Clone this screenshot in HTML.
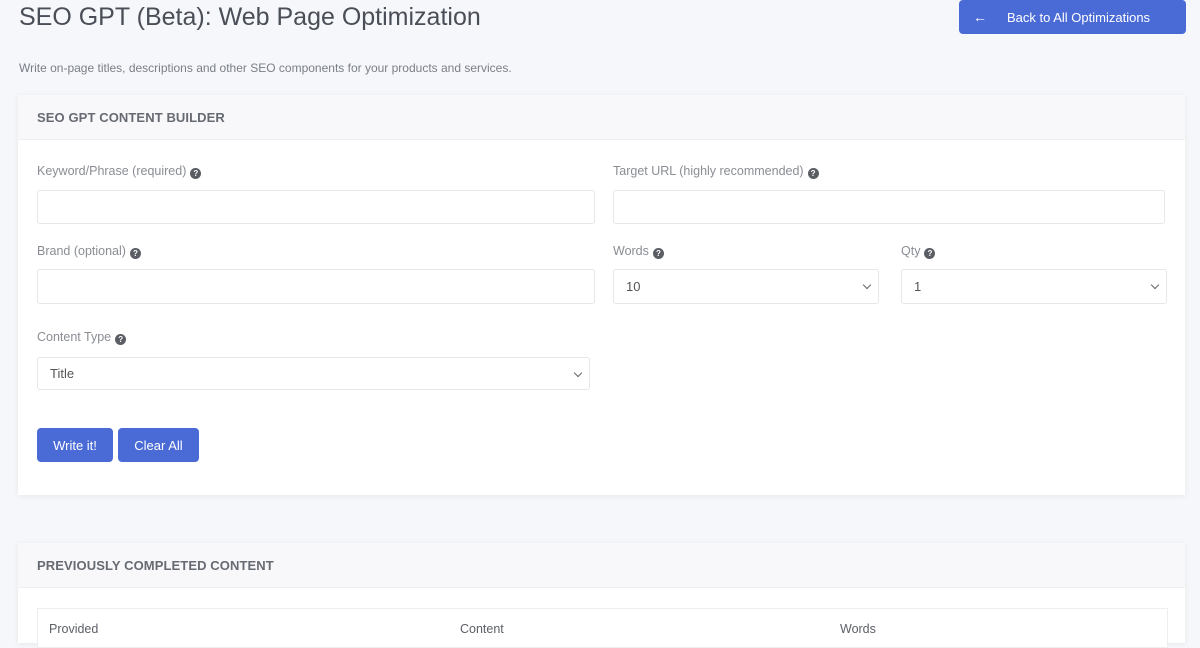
<!DOCTYPE html>
<html><head><meta charset="utf-8"><style>
*{box-sizing:border-box;margin:0;padding:0}
body{width:1200px;height:630px;overflow:hidden;background:#f6f7fa;font-family:"Liberation Sans",sans-serif;color:#6b6f78;position:relative}
.abs{position:absolute}
h1{position:absolute;left:19px;top:3px;font-size:25px;font-weight:normal;color:#4a4e57}
.sub{left:19px;top:61px;font-size:12px;color:#7a7e87}
.btn{background:#4a6ad6;color:#fff;border-radius:4px;font-size:13px;display:flex;align-items:center;justify-content:center}
.card{background:#fff;box-shadow:0 1px 6px rgba(0,0,0,.07)}
.hdr{background:#f8f8fa;border-bottom:1px solid #eeeff2;font-size:13px;font-weight:bold;color:#666a72;padding-left:19px;display:flex;align-items:center;letter-spacing:.1px}
.lbl{font-size:12.5px;color:#8a8d94}
.q{display:inline-block;width:11px;height:11px;border-radius:50%;background:#5a5d64;color:#fff;font-size:8px;text-align:center;line-height:11px;font-weight:bold;vertical-align:-1px;margin-left:4px}
.inp{border:1px solid #e6e7eb;border-radius:3px;background:#fff;font-size:13px;color:#555;padding-left:12px;display:flex;align-items:center}
.chev{position:absolute;right:8px;top:12px;width:6px;height:6px;border-right:1.5px solid #666;border-bottom:1.5px solid #666;transform:rotate(45deg)}
</style></head><body>
<h1>SEO GPT (Beta): Web Page Optimization</h1>
<div class="abs btn" style="left:959px;top:0;width:227px;height:34px;justify-content:flex-start;padding-left:14px;font-size:13px"><span style="font-size:14px;margin-right:20px">←</span>Back to All Optimizations</div>
<div class="abs sub">Write on-page titles, descriptions and other SEO components for your products and services.</div>

<div class="abs card" style="left:18px;top:95px;width:1167px;height:400px">
<div class="hdr" style="height:45px">SEO GPT CONTENT BUILDER</div>
</div>
<div class="abs lbl" style="left:37px;top:164px">Keyword/Phrase (required)<span class="q">?</span></div>
<div class="abs lbl" style="left:613px;top:164px">Target URL (highly recommended)<span class="q">?</span></div>
<div class="abs inp" style="left:37px;top:190px;width:558px;height:34px"></div>
<div class="abs inp" style="left:613px;top:190px;width:552px;height:34px"></div>
<div class="abs lbl" style="left:37px;top:244px">Brand (optional)<span class="q">?</span></div>
<div class="abs lbl" style="left:613px;top:244px">Words<span class="q">?</span></div>
<div class="abs lbl" style="left:901px;top:244px">Qty<span class="q">?</span></div>
<div class="abs inp" style="left:37px;top:269px;width:558px;height:35px"></div>
<div class="abs inp" style="left:613px;top:269px;width:266px;height:35px">10<span class="chev"></span></div>
<div class="abs inp" style="left:901px;top:269px;width:266px;height:35px">1<span class="chev"></span></div>
<div class="abs lbl" style="left:37px;top:330px">Content Type<span class="q">?</span></div>
<div class="abs inp" style="left:37px;top:357px;width:553px;height:33px">Title<span class="chev"></span></div>
<div class="abs btn" style="left:37px;top:428px;width:76px;height:34px">Write it!</div>
<div class="abs btn" style="left:118px;top:428px;width:81px;height:34px">Clear All</div>

<div class="abs card" style="left:18px;top:543px;width:1167px;height:100px">
<div class="hdr" style="height:45px">PREVIOUSLY COMPLETED CONTENT</div>
</div>
<div class="abs" style="left:37px;top:608px;width:1131px;height:40px;border:1px solid #eceef2;background:#fff"></div>
<div class="abs lbl" style="left:49px;top:622px;color:#5d6068">Provided</div>
<div class="abs lbl" style="left:460px;top:622px;color:#5d6068">Content</div>
<div class="abs lbl" style="left:840px;top:622px;color:#5d6068">Words</div>
</body></html>
